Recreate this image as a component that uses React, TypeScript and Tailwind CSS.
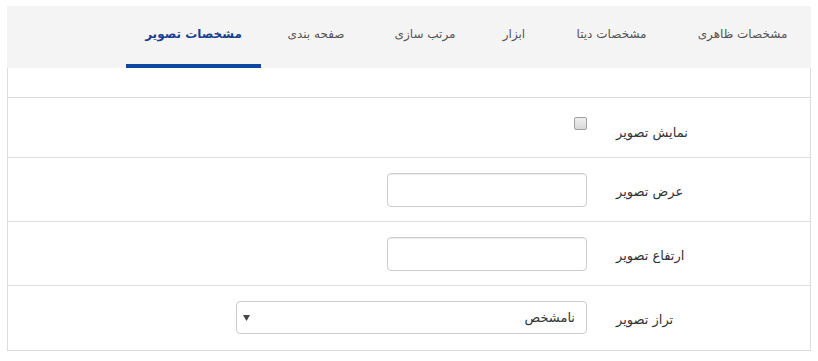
const tabs = [
  { label: "مشخصات ظاهری", w: "w-[137px]" },
  { label: "مشخصات دیتا", w: "w-[125px]" },
  { label: "ابزار", w: "w-[70px]" },
  { label: "مرتب سازی", w: "w-[108px]" },
  { label: "صفحه بندی", w: "w-[110px]" },
  { label: "مشخصات تصویر", w: "w-[135px]", active: true },
];

const font = { fontFamily: "'DejaVu Sans', sans-serif" };

const TextInput = () => (
  <div className="w-[200px] h-[34px] rounded-[4px] border border-[#ccc] bg-white shadow-[inset_0_1px_1px_rgba(0,0,0,0.075)]" />
);

const Row = ({ label, h, children, labelPt, last }: { label: string; h: string; children: React.ReactNode; labelPt: string; last?: boolean }) => (
  <div className={`flex ${h} ${last ? "" : "border-b border-[#ddd]"}`}>
    <div className={`w-[194px] text-left text-[13px] text-[#333] ${labelPt}`}>{label}</div>
    <div className="mr-[29px] flex items-start">{children}</div>
  </div>
);

export default function App() {
  return (
    <div dir="rtl" style={font} className="w-[818px] h-[361px] bg-white px-[7px] pt-[6px]">
      <div className="flex h-[62px] bg-[#f4f4f4]">
        {tabs.map((t) => (
          <div
            key={t.label}
            className={`${t.w} flex justify-center pt-[19px] text-[12px] leading-[18px] ${
              t.active ? "border-b-4 border-[#0e47a1] font-bold text-[#1c3f8f]" : "text-[#555]"
            }`}
          >
            {t.label}
          </div>
        ))}
      </div>
      <div className="w-[804px] border-x border-b border-[#ddd]">
        <div className="h-[30px] border-b border-[#ddd]" />
        <Row label="نمایش تصویر" h="h-[60px]" labelPt="pt-[25px]">
          <span className="mt-[19px] block w-[13px] h-[13px] rounded-[2px] border border-[#a0a0a0] bg-gradient-to-b from-[#f0f0f0] to-[#d8d8d8]" />
        </Row>
        <Row label="عرض تصویر" h="h-[64px]" labelPt="pt-[24px]">
          <div className="mt-[15px]">
            <TextInput />
          </div>
        </Row>
        <Row label="ارتفاع تصویر" h="h-[64px]" labelPt="pt-[24px]">
          <div className="mt-[15px]">
            <TextInput />
          </div>
        </Row>
        <Row label="تراز تصویر" h="h-[64px]" labelPt="pt-[24px]" last>
          <div className="mt-[15px] flex items-center justify-between w-[351px] h-[33px] rounded-[4px] border border-[#ccc] bg-white pr-[11px] pl-[6px]">
            <span className="text-[13px] text-[#333]">نامشخص</span>
            <svg width="7" height="6" viewBox="0 0 7 6">
              <polygon points="0,0 7,0 3.5,6" fill="#444" />
            </svg>
          </div>
        </Row>
      </div>
    </div>
  );
}
